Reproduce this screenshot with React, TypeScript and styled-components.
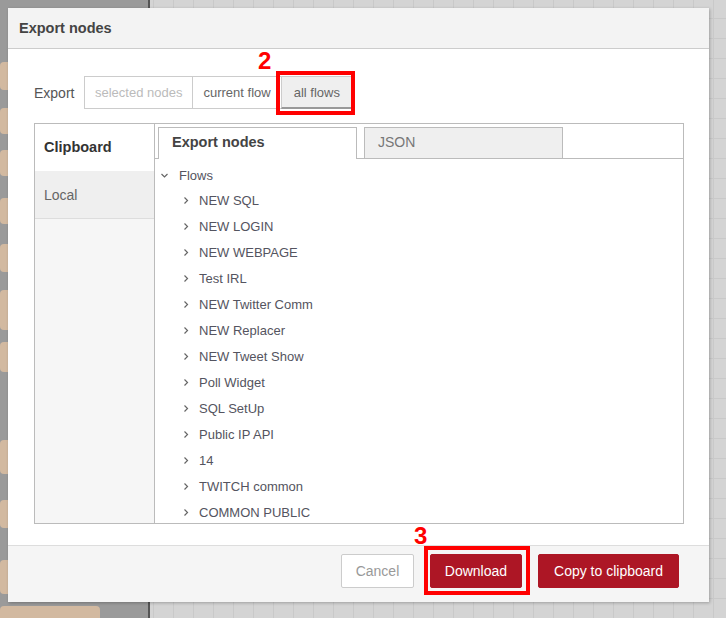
import React from "react";
import styled, { createGlobalStyle } from "styled-components";

const GlobalStyle = createGlobalStyle`
  html, body {
    margin: 0;
    padding: 0;
  }
  body {
    width: 726px;
    height: 618px;
    overflow: hidden;
    font-family: "Liberation Sans", Arial, sans-serif;
    background-color: #d4d4d4;
    background-image:
      linear-gradient(#c9c9c9 1px, transparent 1px),
      linear-gradient(90deg, #c9c9c9 1px, transparent 1px);
    background-size: 20px 20px;
    background-position: -7px -2px;
  }
`;

const Page = styled.div`
  position: relative;
  width: 726px;
  height: 618px;
  padding: 8px;
  box-sizing: border-box;
`;

// editor canvas behind the dialog
const Workspace = styled.div`
  position: absolute;
  left: 0;
  top: 0;
  width: 148px;
  height: 618px;
  background: #9a9a9a;
  border-right: 2px solid #555;
`;

const CanvasNode = styled.div<{ $top: number; $h: number }>`
  position: absolute;
  left: 0;
  top: ${(p) => p.$top}px;
  width: 100px;
  height: ${(p) => p.$h}px;
  background: #d2b9a0;
  border-radius: 4px;
`;

const Dialog = styled.div`
  position: relative;
  width: 701px;
  height: 594px;
  background: #fff;
  box-shadow: 1px 1px 3px rgba(0, 0, 0, 0.25);
  display: flex;
  flex-direction: column;
  color: #555;
`;

const Header = styled.div`
  height: 40px;
  background: #f3f3f3;
  border-bottom: 1px solid #ccc;
  display: flex;
  align-items: center;
  padding-left: 11px;
  font-size: 14.5px;
  font-weight: bold;
  color: #444;
`;

const Body = styled.div`
  flex: 1;
  padding: 27px 25px 0 26px;
  display: flex;
  flex-direction: column;
`;

const ExportRow = styled.div`
  display: flex;
  align-items: center;
  height: 33px;
`;

const Label = styled.span`
  font-size: 14px;
  color: #555;
  width: 50px;
`;

const Group = styled.div`
  display: flex;
  height: 33px;
`;

const GroupButton = styled.div<{ $state: "disabled" | "normal" | "selected" }>`
  display: flex;
  align-items: center;
  padding: 0 10px;
  font-size: 13px;
  box-sizing: border-box;
  border: 1px solid #ccc;
  margin-left: -1px;
  background: ${(p) => (p.$state === "selected" ? "#efefef" : "#fff")};
  color: ${(p) => (p.$state === "disabled" ? "#bbb" : "#666")};
  border-bottom-color: ${(p) => (p.$state === "selected" ? "#999" : "#ccc")};
  border-bottom-width: ${(p) => (p.$state === "selected" ? "2px" : "1px")};
  padding-left: ${(p) => (p.$state === "selected" ? "12px" : "10px")};
  padding-right: ${(p) => (p.$state === "selected" ? "11px" : "10px")};
  &:first-child {
    margin-left: 0;
  }
`;

const Panel = styled.div`
  margin-top: 14px;
  height: 401px;
  border: 1px solid #bbb;
  box-sizing: border-box;
  display: flex;
`;

const Side = styled.div`
  width: 120px;
  box-sizing: border-box;
  background: #f6f6f6;
  border-right: 1px solid #bbb;
  display: flex;
  flex-direction: column;
`;

const SideTab = styled.div<{ $active?: boolean }>`
  height: ${(p) => (p.$active ? 47 : 48)}px;
  box-sizing: border-box;
  display: flex;
  align-items: center;
  padding-left: 9px;
  font-size: ${(p) => (p.$active ? 14.5 : 14)}px;
  font-weight: ${(p) => (p.$active ? "bold" : "normal")};
  color: ${(p) => (p.$active ? "#333" : "#666")};
  background: ${(p) => (p.$active ? "#fff" : "#efefef")};
  border-bottom: 1px solid ${(p) => (p.$active ? "transparent" : "#ddd")};
`;

const Main = styled.div`
  flex: 1;
  display: flex;
  flex-direction: column;
  overflow: hidden;
`;

const TabBar = styled.div`
  height: 35px;
  border-bottom: 1px solid #bbb;
  display: flex;
  align-items: flex-end;
  gap: 7px;
  padding-left: 3px;
  box-sizing: border-box;
`;

const Tab = styled.div<{ $active?: boolean }>`
  width: 199px;
  height: ${(p) => (p.$active ? "32px" : "31px")};
  margin-bottom: ${(p) => (p.$active ? "-1px" : "0")};
  padding-bottom: ${(p) => (p.$active ? "3px" : "2px")};
  box-sizing: border-box;
  border: 1px solid #bbb;
  border-bottom: 0;
  background: ${(p) => (p.$active ? "#fff" : "#efefef")};
  display: flex;
  align-items: center;
  padding-left: 13px;
  font-size: ${(p) => (p.$active ? 14.5 : 14)}px;
  font-weight: ${(p) => (p.$active ? "bold" : "normal")};
  color: ${(p) => (p.$active ? "#444" : "#777")};
`;

const Tree = styled.div`
  flex: 1;
  overflow: hidden;
  padding-top: 4px;
`;

const TreeRow = styled.div<{ $depth: number }>`
  height: ${(p) => (p.$depth ? 26 : 24)}px;
  display: flex;
  align-items: center;
  padding-left: ${(p) => 6 + p.$depth * 22}px;
  font-size: 13px;
  color: #545460;
  svg {
    flex: none;
    margin-right: ${(p) => (p.$depth ? 9 : 11)}px;
  }
`;

const Footer = styled.div`
  margin-top: 20px;
  height: 57px;
  background: #f5f5f5;
  border-top: 1px solid #ddd;
  box-sizing: border-box;
  display: flex;
  justify-content: flex-end;
  align-items: flex-start;
  gap: 16px;
  padding: 8px 30px 0 0;
`;

const Button = styled.div<{ $primary?: boolean; $pad: number }>`
  height: 34px;
  padding: 0 ${(p) => p.$pad}px;
  box-sizing: border-box;
  display: flex;
  align-items: center;
  font-size: 14px;
  border-radius: 2px;
  border: 1px solid ${(p) => (p.$primary ? "#ad1625" : "#ccc")};
  background: ${(p) => (p.$primary ? "#ad1625" : "#fff")};
  color: ${(p) => (p.$primary ? "#fff" : "#999")};
`;

const Mark = styled.div<{ $x: number; $y: number; $w: number; $h: number }>`
  position: absolute;
  left: ${(p) => p.$x}px;
  top: ${(p) => p.$y}px;
  width: ${(p) => p.$w}px;
  height: ${(p) => p.$h}px;
  border: 4px solid #ff0000;
  box-sizing: border-box;
  pointer-events: none;
`;

const Step = styled.div<{ $x: number; $y: number }>`
  position: absolute;
  left: ${(p) => p.$x}px;
  top: ${(p) => p.$y}px;
  color: #ff0000;
  font-family: "Liberation Sans", Arial, sans-serif;
  font-weight: bold;
  font-size: 24px;
  line-height: 24px;
`;

const Chevron = ({ down }: { down?: boolean }) => (
  <svg width="7" height="7" viewBox="0 0 7 7">
    <path
      d={down ? "M0.5 2 L3.5 5 L6.5 2" : "M1.5 0.5 L4.5 3.5 L1.5 6.5"}
      fill="none"
      stroke="#666"
      strokeWidth="1.2"
    />
  </svg>
);

const flows = [
  "NEW SQL",
  "NEW LOGIN",
  "NEW WEBPAGE",
  "Test IRL",
  "NEW Twitter Comm",
  "NEW Replacer",
  "NEW Tweet Show",
  "Poll Widget",
  "SQL SetUp",
  "Public IP API",
  "14",
  "TWITCH common",
  "COMMON PUBLIC",
];

const nodeSpots = [
  [62, 28], [108, 26], [150, 26], [198, 26], [244, 28], [290, 40], [342, 30],
  [440, 34], [500, 28], [560, 34], [606, 30],
];

export default function App() {
  return (
    <>
      <GlobalStyle />
      <Page>
        <Workspace>
          {nodeSpots.map(([t, h]) => (
            <CanvasNode key={t} $top={t} $h={h} />
          ))}
        </Workspace>
        <Dialog>
          <Header>Export nodes</Header>
          <Body>
            <ExportRow>
              <Label>Export</Label>
              <Group>
                <GroupButton $state="disabled">selected nodes</GroupButton>
                <GroupButton $state="normal">current flow</GroupButton>
                <GroupButton $state="selected">all flows</GroupButton>
              </Group>
            </ExportRow>
            <Panel>
              <Side>
                <SideTab $active>Clipboard</SideTab>
                <SideTab>Local</SideTab>
              </Side>
              <Main>
                <TabBar>
                  <Tab $active>Export nodes</Tab>
                  <Tab>JSON</Tab>
                </TabBar>
                <Tree>
                  <TreeRow $depth={0}>
                    <Chevron down />
                    Flows
                  </TreeRow>
                  {flows.map((f) => (
                    <TreeRow key={f} $depth={1}>
                      <Chevron />
                      {f}
                    </TreeRow>
                  ))}
                </Tree>
              </Main>
            </Panel>
          </Body>
          <Footer>
            <Button $pad={13.5}>Cancel</Button>
            <Button $primary $pad={14}>Download</Button>
            <Button $primary $pad={15}>Copy to clipboard</Button>
          </Footer>
        </Dialog>
        <Step $x={258} $y={49}>2</Step>
        <Mark $x={276} $y={71} $w={79} $h={44} />
        <Step $x={414} $y={524}>3</Step>
        <Mark $x={424} $y={546} $w={106} $h={49} />
      </Page>
    </>
  );
}
